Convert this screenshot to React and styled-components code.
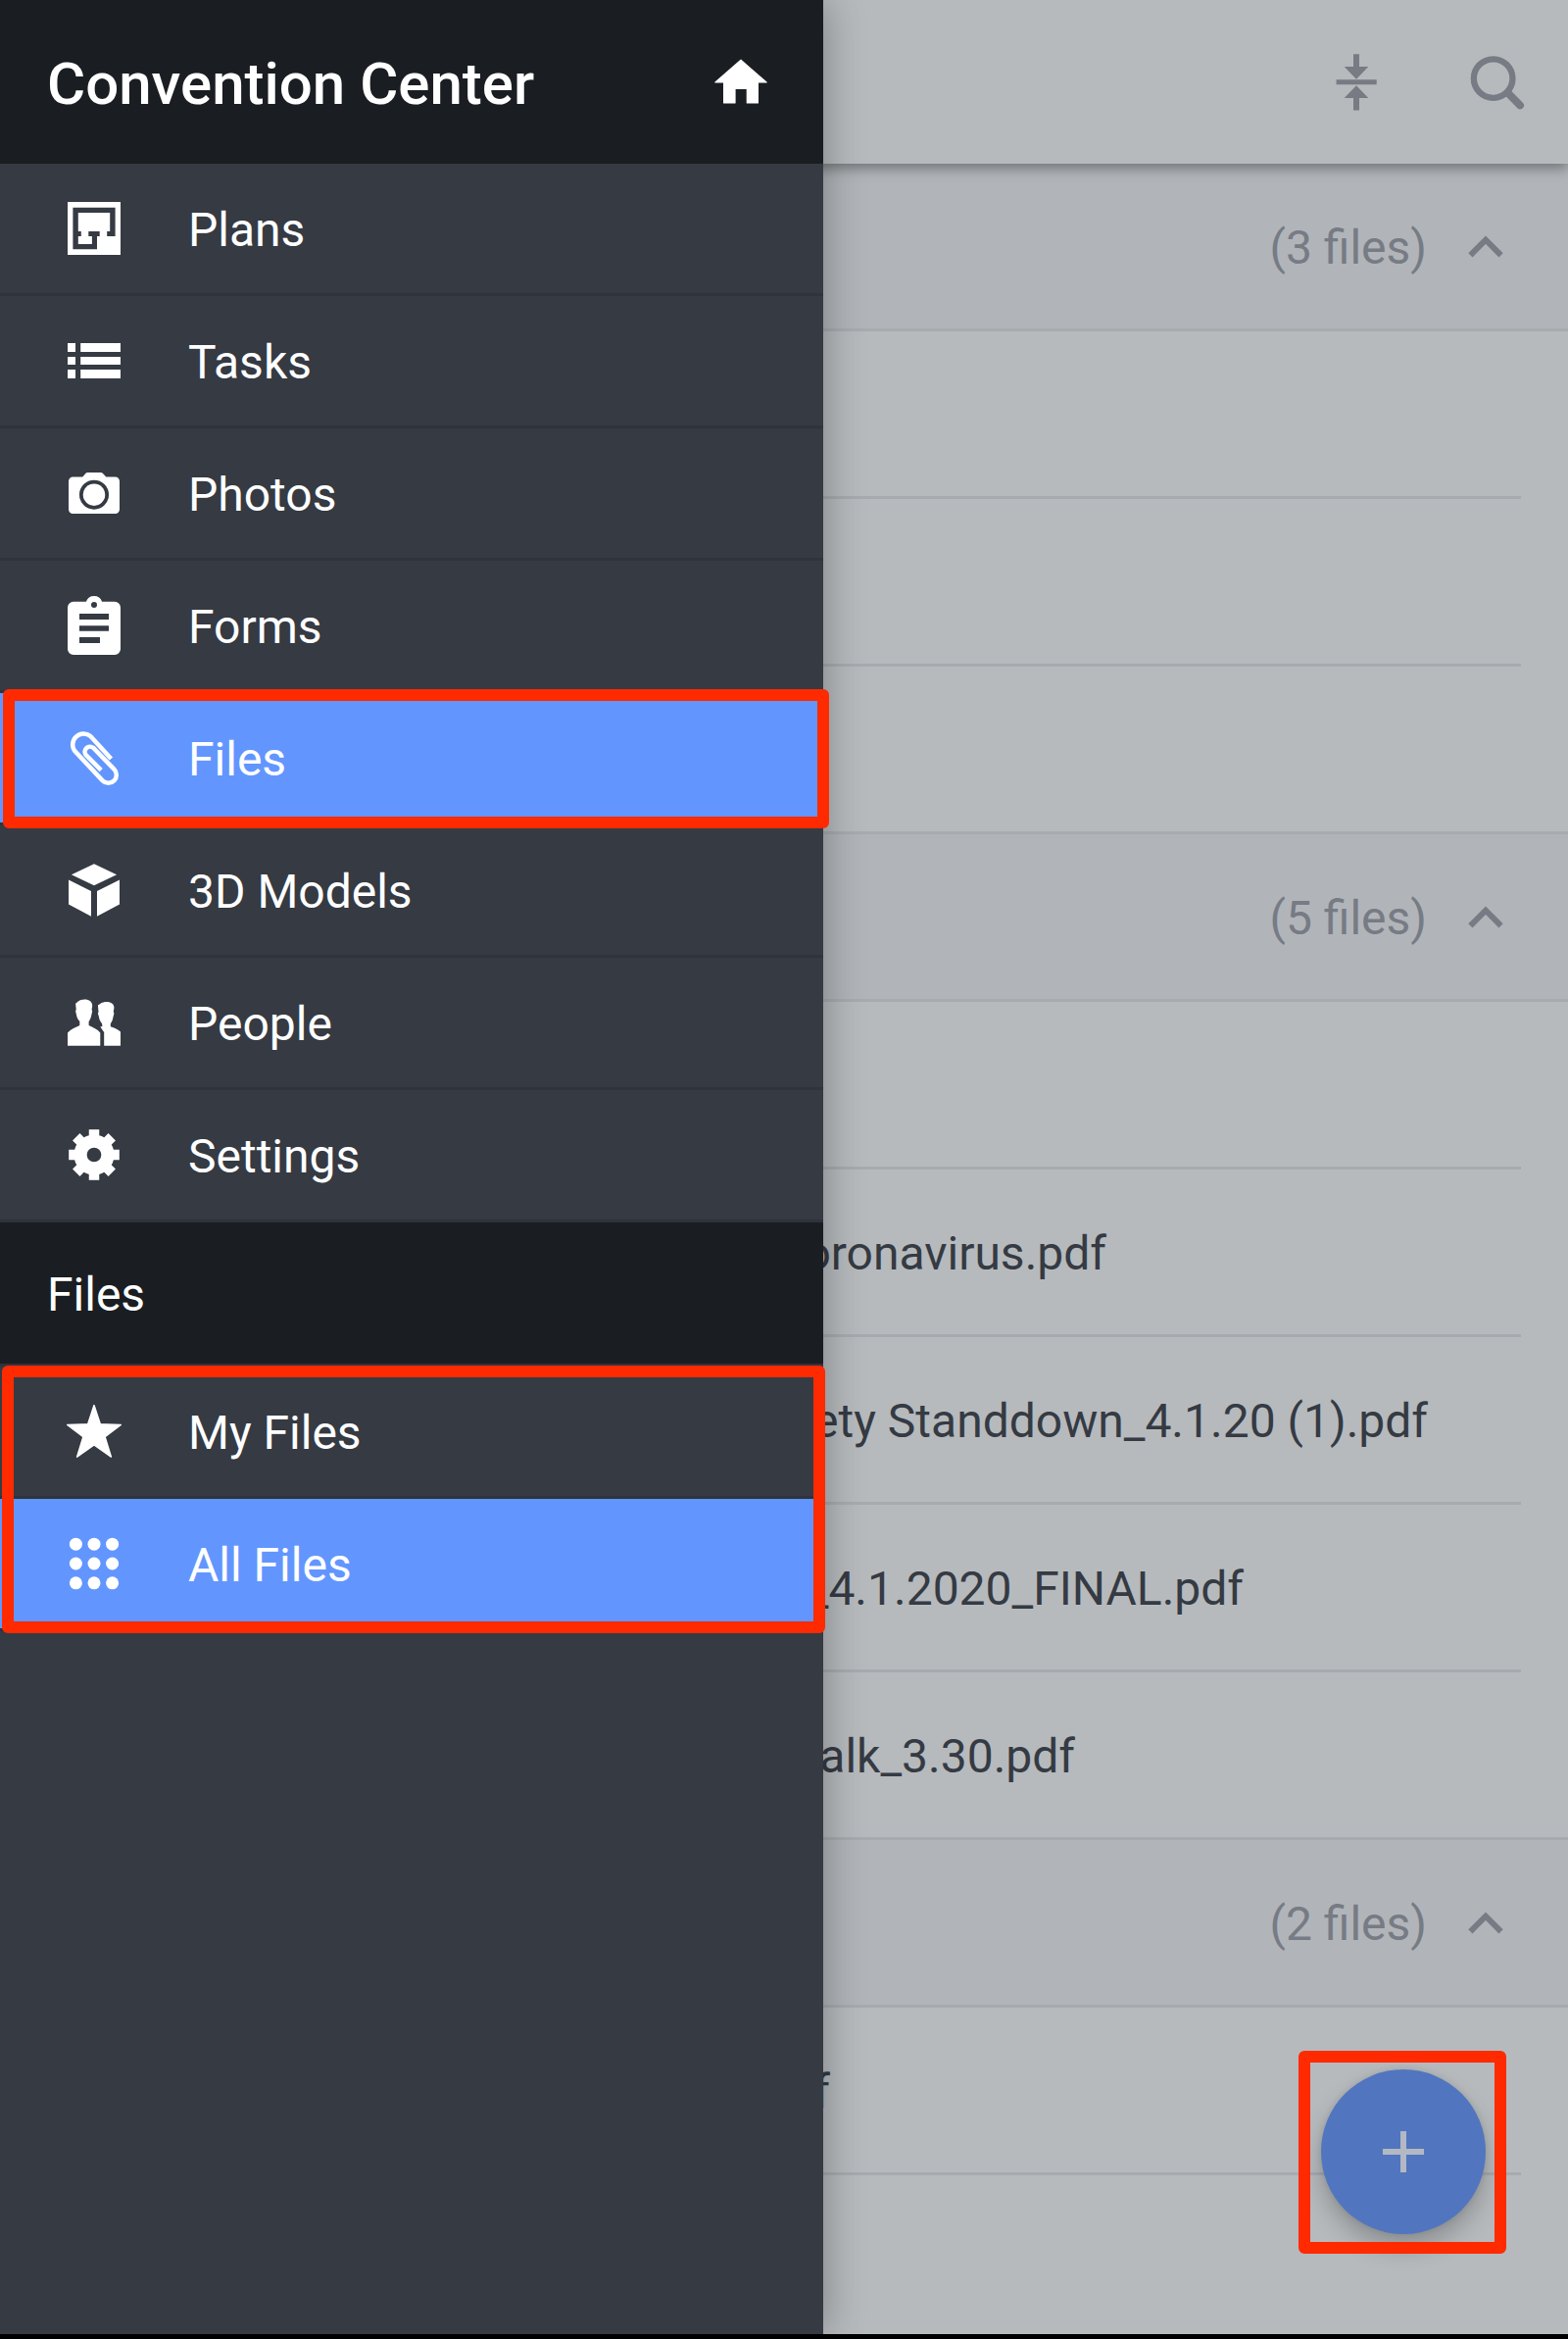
import React from "react";
import styled, { createGlobalStyle } from "styled-components";

const navItems = [
  { label: "Plans", icon: PlansIcon },
  { label: "Tasks", icon: TasksIcon },
  { label: "Photos", icon: PhotosIcon },
  { label: "Forms", icon: FormsIcon },
  { label: "Files", icon: ClipIcon, active: true },
  { label: "3D Models", icon: CubeIcon },
  { label: "People", icon: PeopleIcon },
  { label: "Settings", icon: GearIcon },
];

const fileFilters = [
  { label: "My Files", icon: StarIcon },
  { label: "All Files", icon: GridIcon, active: true },
];

// end is the x position where the file name stops
const groups = [
  { count: "(3 files)", files: [{}, {}, {}] },
  {
    count: "(5 files)",
    files: [
      {},
      { name: "Coronavirus.pdf", end: 1129 },
      { name: "Safety Standdown_4.1.20 (1).pdf", end: 1457 },
      { name: "_4.1.2020_FINAL.pdf", end: 1269 },
      { name: "Talk_3.30.pdf", end: 1097 },
    ],
  },
  { count: "(2 files)", files: [{ name: ".pdf", end: 847 }, {}] },
];

function PlansIcon() {
  return (
    <Icon viewBox="0 0 24 24">
      <path
        fillRule="evenodd"
        d="M3 3H21V21H3ZM4.8 4.9V19.1H13V14.7H13.9V13H10.1V14.7H11.3V17.3H6.6V14.7H7.6V13H6.6V6.7H17.4V13H16.4V14.7H19.2V4.9Z"
      />
    </Icon>
  );
}

function TasksIcon() {
  return (
    <Icon viewBox="0 0 24 24">
      <path d="M3 6h2.67v3H3zM7.4 6H21v3H7.4zM3 10.67h2.67v2.66H3zM7.4 10.67H21v2.66H7.4zM3 15h2.67v3H3zM7.4 15H21v3H7.4z" />
    </Icon>
  );
}

function PhotosIcon() {
  return (
    <Icon viewBox="0 0 24 24">
      <path
        fillRule="evenodd"
        d="M4.8 6.5H8.1L9.1 5.3Q9.4 5 9.8 5H14.3Q14.7 5 15 5.3L16.1 6.5H19.2A1.5 1.5 0 0 1 20.67 8V17.5A1.5 1.5 0 0 1 19.2 19H4.8A1.5 1.5 0 0 1 3.33 17.5V8A1.5 1.5 0 0 1 4.8 6.5ZM12 7.55A5 5 0 1 0 12 17.55A5 5 0 1 0 12 7.55Z"
      />
      <circle cx="12" cy="12.55" r="3.75" />
    </Icon>
  );
}

function FormsIcon() {
  return (
    <Icon viewBox="0 0 24 24">
      <path
        fillRule="evenodd"
        d="M5 3.95H9.3A2.85 2.85 0 0 1 14.7 3.95H19A2 2 0 0 1 21 5.95V20A2 2 0 0 1 19 22H5A2 2 0 0 1 3 20V5.95A2 2 0 0 1 5 3.95ZM12 4A1 1 0 1 0 12 6A1 1 0 1 0 12 4ZM7 8V10H17V8ZM7 12.05V13.95H17V12.05ZM7 16V18H14V16Z"
      />
    </Icon>
  );
}

function ClipIcon() {
  return (
    <Icon viewBox="0 0 24 24">
      <path
        fill="none"
        stroke="currentColor"
        strokeWidth="1.5"
        d="M17.8 12.3L10.8 4.7A3.7 3.7 0 0 0 5.5 9.8L14.9 19.8A2.75 2.75 0 0 0 18.8 15.9L11.7 8.6A1.75 1.75 0 0 0 9.2 11L14.4 16.2"
      />
    </Icon>
  );
}

function CubeIcon() {
  return (
    <Icon viewBox="0 0 24 24">
      <path d="M12 3.1L19.7 6.75L12 10.4L4.3 6.75ZM3.33 8.5L11 12.3V20.9L3.33 16.8ZM20.67 8.5L13 12.3V20.9L20.67 16.8Z" />
    </Icon>
  );
}

function PeopleIcon() {
  return (
    <Icon viewBox="0 0 24 24">
      <path d="M3 19.9V15.5C4.1 14.2 5.8 13.7 7.1 13V11.6C6.5 11 6.1 10.2 6 9.4L5.7 8.2L5.9 7.6L5.7 5.6C6.4 5.2 6.8 4.2 8.8 4.2C10.3 4.2 11.5 5 11.4 6.5L11.2 7.6L11.4 8.2L11.1 9.5C11 10.3 10.6 11.1 10.2 11.7V13C11.6 13.7 13.2 14.3 14.1 15.5V19.9Z" />
      <path d="M15.4 19.9V15.3L14.1 13.5L14.8 13.3L14.7 12.4C14.1 11.7 13.7 10.8 13.6 9.9L13.3 9L13.5 8.3L13.3 6.2C14 5.8 14.5 5 16.3 5C17.8 5 18.9 5.8 18.8 7.1L18.6 8.3L18.8 9L18.5 10.1C18.4 11 18 11.9 17.6 12.4V13.4C18.9 13.9 20.3 14.3 21 15.2V19.9Z" />
    </Icon>
  );
}

function GearIcon() {
  return (
    <Icon viewBox="0 0 24 24">
      <circle cx="12" cy="12" r="4.65" fill="none" stroke="currentColor" strokeWidth="4.4" />
      {[0, 45, 90, 135, 180, 225, 270, 315].map((angle) => (
        <rect
          key={angle}
          x="10.25"
          y="3.4"
          width="3.5"
          height="3"
          transform={`rotate(${angle} 12 12)`}
        />
      ))}
    </Icon>
  );
}

function StarIcon() {
  return (
    <Icon viewBox="0 0 24 24">
      <path
        stroke="currentColor"
        strokeWidth="0.5"
        strokeLinejoin="round"
        d="M12 3.2L14.1 9.6L21.1 9.8L15.7 13.9L17.8 20.7L12 16.6L6.2 20.7L8.3 13.9L2.9 9.8L9.9 9.6Z"
      />
    </Icon>
  );
}

function GridIcon() {
  return (
    <Icon viewBox="0 0 24 24">
      {[5.4, 12, 18.6].map((y) =>
        [5.8, 12, 18.2].map((x) => <circle key={x + y} cx={x} cy={y} r="2.17" />)
      )}
    </Icon>
  );
}

function HomeIcon() {
  return (
    <Icon viewBox="0 0 24 24">
      <path
        stroke="currentColor"
        strokeWidth="0.4"
        strokeLinejoin="round"
        d="M12 4.4L20.7 12H17.8V19H14.1V14.1H10V19H6.2V12H3.3Z"
      />
    </Icon>
  );
}

function CollapseIcon() {
  return (
    <Icon viewBox="0 0 24 24">
      <path d="M11 2.4H13V6.7H16.1L12 10.9L7.9 6.7H11ZM5.2 11.05H18.9V12.75H5.2ZM12 13.1L16.1 17.3H13V21.5H11V17.3H7.9Z" />
    </Icon>
  );
}

function SearchIcon() {
  return (
    <Icon viewBox="0 0 24 24" fill="none" stroke="currentColor">
      <circle cx="10.55" cy="10.7" r="6.6" strokeWidth="2.1" />
      <path d="M15.6 15.7L19.7 19.8" strokeWidth="2.6" strokeLinecap="round" />
    </Icon>
  );
}

function ChevronUp() {
  return (
    <Icon viewBox="0 0 24 24">
      <path fill="none" stroke="currentColor" strokeWidth="2" d="M6.8 15.1L12 9.9L17.2 15.1" />
    </Icon>
  );
}

function PlusIcon() {
  return (
    <Icon viewBox="0 0 24 24">
      <path d="M11 5h2v6h6v2h-6v6h-2v-6H5v-2h6z" />
    </Icon>
  );
}

function NavList({ items }) {
  return items.map(({ label, icon: ItemIcon, active }) => (
    <NavItem key={label} $active={active}>
      <ItemIcon />
      <Label>{label}</Label>
    </NavItem>
  ));
}

function App() {
  return (
    <Screen>
      <GlobalStyle />
      <Toolbar>
        <CollapseIcon />
        <SearchIcon />
      </Toolbar>
      <FileList>
        {groups.map(({ count, files }) => (
          <section key={count}>
            <GroupHeader>
              <Label>{count}</Label>
              <ChevronUp />
            </GroupHeader>
            {files.map(({ name, end }, i) => (
              <FileRow key={i} $last={i === files.length - 1}>
                <FileName $end={end}>{name}</FileName>
              </FileRow>
            ))}
          </section>
        ))}
      </FileList>
      <AddButton>
        <PlusIcon />
      </AddButton>
      <Drawer>
        <DrawerHeader>
          <Title>Convention Center</Title>
          <HomeIcon />
        </DrawerHeader>
        <NavList items={navItems} />
        <SectionHeader>
          <Label>Files</Label>
        </SectionHeader>
        <NavList items={fileFilters} />
      </Drawer>
      <Highlight $x={3} $y={703} $w={843} $h={142} />
      <Highlight $x={1.5} $y={1393} $w={840} $h={273} />
      <Highlight $x={1324.7} $y={2092} $w={212} $h={207} />
      <BottomBar />
    </Screen>
  );
}

const GlobalStyle = createGlobalStyle`
  * {
    box-sizing: border-box;
  }
  body {
    margin: 0;
    background: #000;
  }
`;

const Screen = styled.div`
  position: relative;
  display: flex;
  flex-direction: column;
  width: 1600px;
  height: 2386px;
  overflow: hidden;
  background: #b6babd;
  color: #353a43;
  font-family: Roboto, sans-serif;
  font-size: 48px;
  line-height: 56px;
`;

const Icon = styled.svg`
  flex: none;
  display: block;
  width: 72px;
  height: 72px;
  fill: ${(props) => props.fill || "currentColor"};
`;

const Label = styled.span`
  padding-top: 4px;
  white-space: nowrap;
`;

const Toolbar = styled.header`
  position: relative;
  z-index: 1;
  flex: none;
  display: flex;
  align-items: center;
  justify-content: flex-end;
  gap: 72px;
  height: 167px;
  padding-right: 36px;
  background: #b6babd;
  color: #777b84;
  box-shadow: 0 5px 12px rgba(0, 0, 0, 0.35);
`;

const FileList = styled.main`
  flex: 1;
  min-height: 0;
  overflow: hidden;
`;

const GroupHeader = styled.div`
  display: flex;
  align-items: center;
  justify-content: flex-end;
  gap: 24px;
  height: 171px;
  padding-right: 48px;
  border-bottom: 3px solid #a7abaf;
  background: #b1b5b9;
  color: #777b84;
`;

const FileRow = styled.div`
  display: flex;
  align-items: center;
  height: 171px;
  margin-right: ${(props) => (props.$last ? "0" : "48px")};
  border-bottom: 3px solid #a7abaf;
`;

const FileName = styled.span`
  width: ${(props) => props.$end || 0}px;
  padding-top: 4px;
  text-align: right;
  white-space: nowrap;
`;

const AddButton = styled.button`
  position: absolute;
  right: 84px;
  bottom: 107px;
  display: flex;
  align-items: center;
  justify-content: center;
  width: 168px;
  height: 168px;
  padding: 0;
  border: none;
  border-radius: 50%;
  background: #5176bf;
  color: #b3b8c3;
  box-shadow: 0 14px 24px rgba(0, 0, 0, 0.22), 0 0 6px rgba(0, 0, 0, 0.1);
`;

const Drawer = styled.nav`
  position: absolute;
  z-index: 2;
  top: 0;
  left: 0;
  width: 840px;
  height: 2381px;
  background: #353a43;
  color: #fff;
  box-shadow: 0 0 40px rgba(0, 0, 0, 0.32);
`;

const DrawerHeader = styled.div`
  display: flex;
  align-items: center;
  justify-content: space-between;
  height: 167px;
  padding: 0 48px;
  background: #1a1e22;
`;

const Title = styled.h1`
  margin: 0;
  padding-top: 4px;
  font-size: 60px;
  font-weight: 500;
  line-height: 70px;
`;

const NavItem = styled.div`
  display: flex;
  align-items: center;
  gap: 60px;
  height: 135px;
  padding-left: 60px;
  border-bottom: 3px solid #2e333c;
  background: ${(props) => (props.$active ? "#6296fe" : "#353a43")};
`;

const SectionHeader = styled.div`
  display: flex;
  align-items: center;
  height: 147px;
  padding-left: 48px;
  border-bottom: 3px solid #2e333c;
  background: #1a1e22;
`;

const Highlight = styled.div`
  position: absolute;
  z-index: 3;
  left: ${(props) => props.$x}px;
  top: ${(props) => props.$y}px;
  width: ${(props) => props.$w}px;
  height: ${(props) => props.$h}px;
  border: 12px solid #ff2a00;
  border-radius: 6px;
  pointer-events: none;
`;

const BottomBar = styled.footer`
  position: relative;
  z-index: 4;
  flex: none;
  height: 5px;
  background: #000;
`;

export default App;
